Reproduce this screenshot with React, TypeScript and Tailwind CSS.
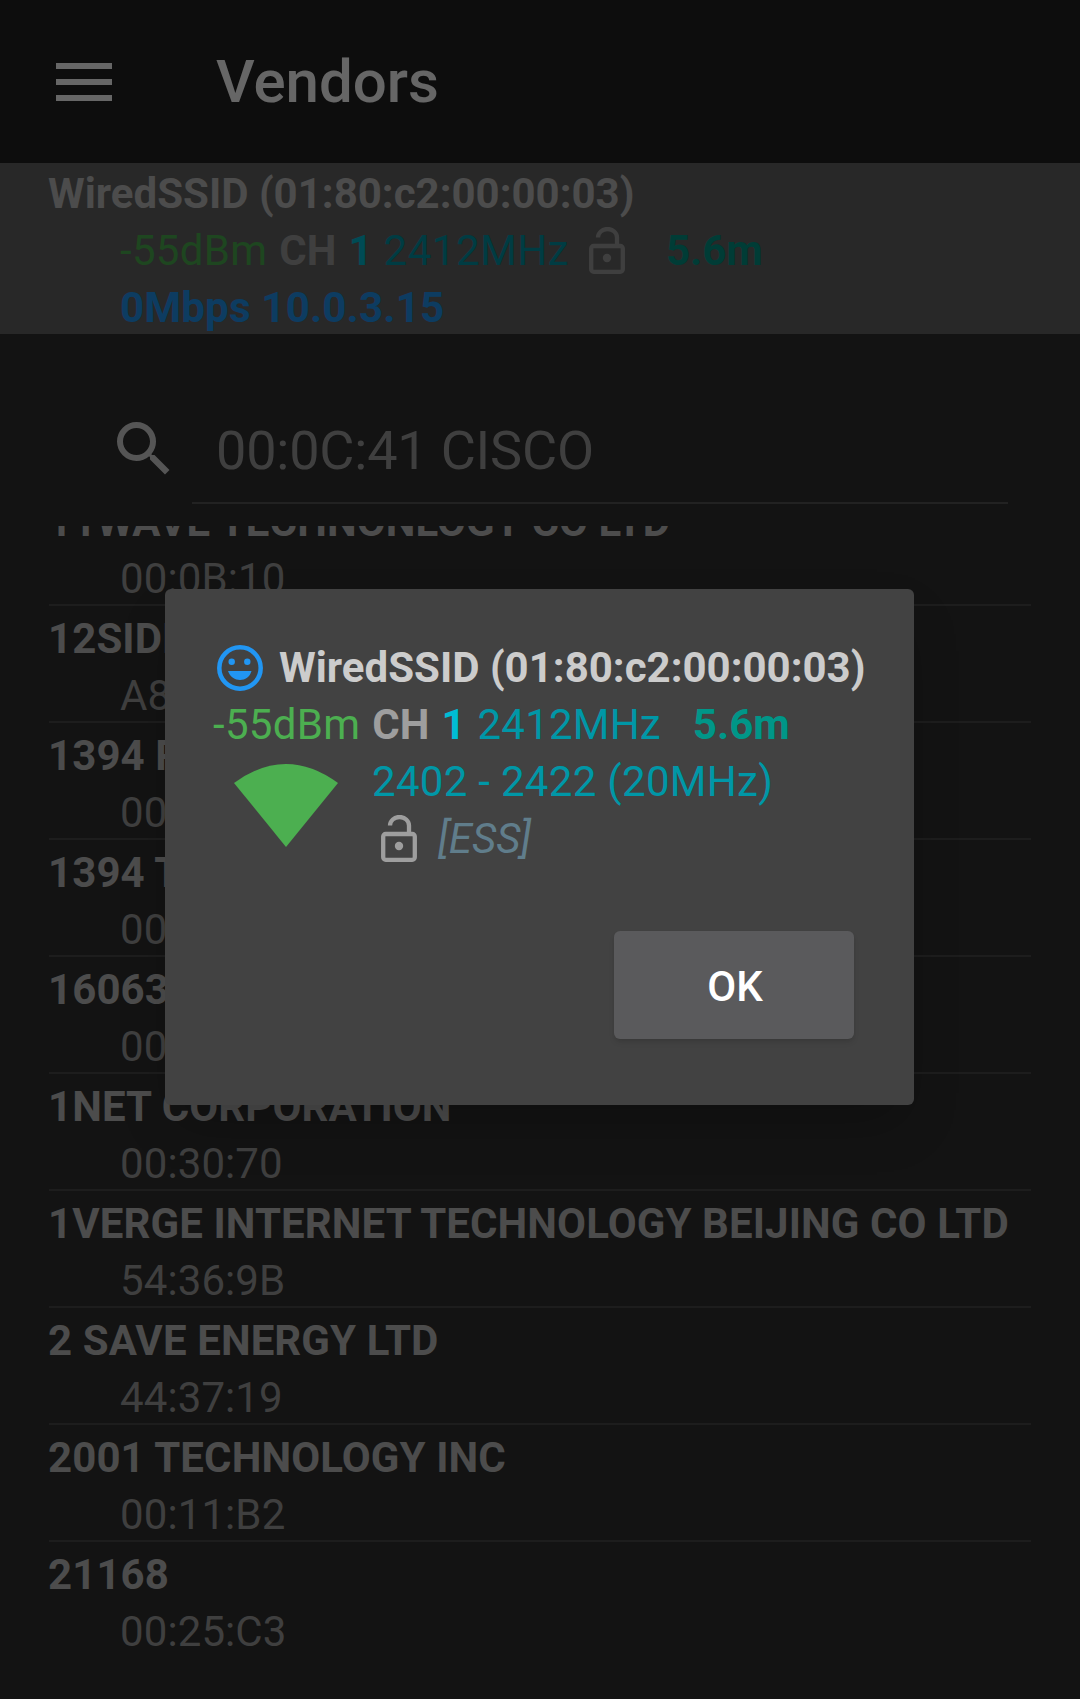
import React from 'react'

const vendors = [
  { name: '11WAVE TECHNONLOGY CO LTD', mac: '00:0B:10' },
  { name: '12SIDES TECHNOLOGIES', mac: 'A8:3F:A1' },
  { name: '1394 PRINTER WORKING GROUP', mac: '00:60:9F' },
  { name: '1394 TRADE ASSOCIATION', mac: '00:A0:2D' },
  { name: '16063 INC', mac: '00:0C:5A' },
  { name: '1NET CORPORATION', mac: '00:30:70' },
  { name: '1VERGE INTERNET TECHNOLOGY BEIJING CO LTD', mac: '54:36:9B' },
  { name: '2 SAVE ENERGY LTD', mac: '44:37:19' },
  { name: '2001 TECHNOLOGY INC', mac: '00:11:B2' },
  { name: '21168', mac: '00:25:C3' },
]

const LockIcon = ({ className }: { className?: string }) => (
  <svg viewBox="0 0 36 47" className={className} fill="none">
    <path d="M28 19V10.500A9.500 8.500 0 0 0 9 10.500" stroke="currentColor" strokeWidth="4.300" />
    <rect x="2.200" y="19" width="31.600" height="25.800" rx="2.500" stroke="currentColor" strokeWidth="4.300" />
    <circle cx="18" cy="31" r="4.200" fill="currentColor" />
  </svg>
)

export default function App() {
  return (
    <div className="relative h-[1699px] w-[1080px] overflow-hidden bg-[#303030] font-['Roboto',sans-serif]">
      {/* Toolbar */}
      <div className="flex h-[163px] items-center bg-[#212121] text-white">
        <svg viewBox="0 0 56 38" className="ml-[56px] h-[38px] w-[56px] shrink-0" fill="currentColor">
          <rect width="56" height="6" />
          <rect y="16" width="56" height="6" />
          <rect y="32" width="56" height="6" />
        </svg>
        <span className="ml-[104px] text-[60px] font-medium">Vendors</span>
      </div>

      {/* Current connection */}
      <div className="h-[171px] bg-[#646464] pl-[48px] pt-[2px] text-[42px] leading-[57px]">
        <div className="font-bold text-[#bdbdbd]">WiredSSID (01:80:c2:00:00:03)</div>
        <div className="flex items-center pl-[72px]">
          <span className="tracking-[0.3px] text-[#4caf50]">-55dBm</span>
          <span className="ml-[12px] font-bold text-[#9e9e9e]">CH</span>
          <span className="ml-[12px] font-bold text-[#00bcd4]">1</span>
          <span className="ml-[11px] tracking-[0.5px] text-[#0097a7]">2412MHz</span>
          <LockIcon className="ml-[20px] h-[47px] w-[36px] text-[#9e9e9e]" />
          <span className="ml-[41px] font-bold text-[#009688]">5.6m</span>
        </div>
        <div className="pl-[72px] font-bold tracking-[0.2px] text-[#2196f3]">0Mbps 10.0.3.15</div>
      </div>

      {/* Search */}
      <div className="flex h-[192px] pl-[108px] pr-[72px]">
        <svg viewBox="0 0 24 24" className="mt-[79px] h-[72px] w-[72px] shrink-0 text-[#d4d4d4]" fill="currentColor">
          <path d="M15.500 14h-.79l-.28-.27A6.471 6.471 0 0 0 16 9.500 6.500 6.500 0 1 0 9.500 16c1.610 0 3.090-.59 4.230-1.570l.27.28v.79l5 4.990L20.490 19l-4.990-5zm-6 0C7.010 14 5 11.990 5 9.500S7.010 5 9.500 5 14 7.010 14 9.500 11.990 14 9.500 14z" />
        </svg>
        <div className="ml-[12px] mt-[43px] h-[127px] flex-1 border-b-2 border-[#555555] pl-[24px] pt-[42px] text-[54px] leading-[64px] tracking-[-0.2px] text-[#9e9e9e]">
          00:0C:41 CISCO
        </div>
      </div>

      {/* Vendor list */}
      <div className="h-[1173px] overflow-hidden px-[49px]">
        {vendors.map((v, i) => (
          <div
            key={v.name}
            className={`h-[117px] border-b-2 border-[#4a4a4a] text-[42px] leading-[57px] last:border-b-0 ${i === 0 ? '-mt-[37px]' : ''}`}
          >
            <div className="-ml-[1px] pt-[4px] font-bold tracking-[0.1px] text-[#bdbdbd]">{v.name}</div>
            <div className="pl-[71px] tracking-[0.1px] text-[#9e9e9e]">{v.mac}</div>
          </div>
        ))}
      </div>

      {/* Dim behind dialog */}
      <div className="absolute inset-0 bg-black/60" />

      {/* Dialog */}
      <div className="absolute left-[165px] top-[589px] h-[516px] w-[749px] rounded-[6px] bg-[#424242] pl-[48px] pr-[60px] shadow-2xl">
        <div className="flex items-center pt-[50px] text-[42px] leading-[57px]">
          <svg viewBox="0 0 46 46" className="ml-[4px] h-[46px] w-[46px] shrink-0 text-[#2196f3]" fill="currentColor">
            <circle cx="23" cy="23" r="20.700" fill="none" stroke="currentColor" strokeWidth="4.500" />
            <circle cx="14.700" cy="16.700" r="3.200" />
            <circle cx="30.300" cy="16.700" r="3.200" />
            <path d="M11 26H34.500C33 32 28 35 23 35S13 32 11 26z" />
          </svg>
          <span className="ml-[16px] whitespace-nowrap font-bold text-[#cccccc]">WiredSSID (01:80:c2:00:00:03)</span>
        </div>
        <div className="flex text-[42px] leading-[57px]">
          <span className="tracking-[0.3px] text-[#4caf50]">-55dBm</span>
          <span className="ml-[12px] font-bold text-[#9e9e9e]">CH</span>
          <span className="ml-[12px] font-bold text-[#00bcd4]">1</span>
          <span className="ml-[12px] tracking-[0.2px] text-[#0097a7]">2412MHz</span>
          <span className="ml-[32px] font-bold text-[#009688]">5.6m</span>
        </div>
        <div className="flex">
          <svg viewBox="0 0 104 83" className="ml-[21px] mt-[11px] h-[83px] w-[104px] shrink-0">
            <path d="M0 19Q52-19 104 19L52 83z" fill="#4caf50" />
          </svg>
          <div className="ml-[34px] text-[42px] leading-[57px]">
            <div className="tracking-[0.3px] text-[#0097a7]">2402 - 2422 (20MHz)</div>
            <div className="flex items-center">
              <LockIcon className="ml-[9px] h-[47px] w-[36px] text-[#9e9e9e]" />
              <span className="ml-[21px] italic text-[#607d8b]">[ESS]</span>
            </div>
          </div>
        </div>
        <button className="absolute left-[449px] top-[342px] flex h-[108px] w-[240px] items-center justify-center rounded-[6px] bg-[#5a5a5c] pl-[2px] pt-[2px] text-[42px] font-medium text-white shadow-md">
          OK
        </button>
      </div>
    </div>
  )
}
